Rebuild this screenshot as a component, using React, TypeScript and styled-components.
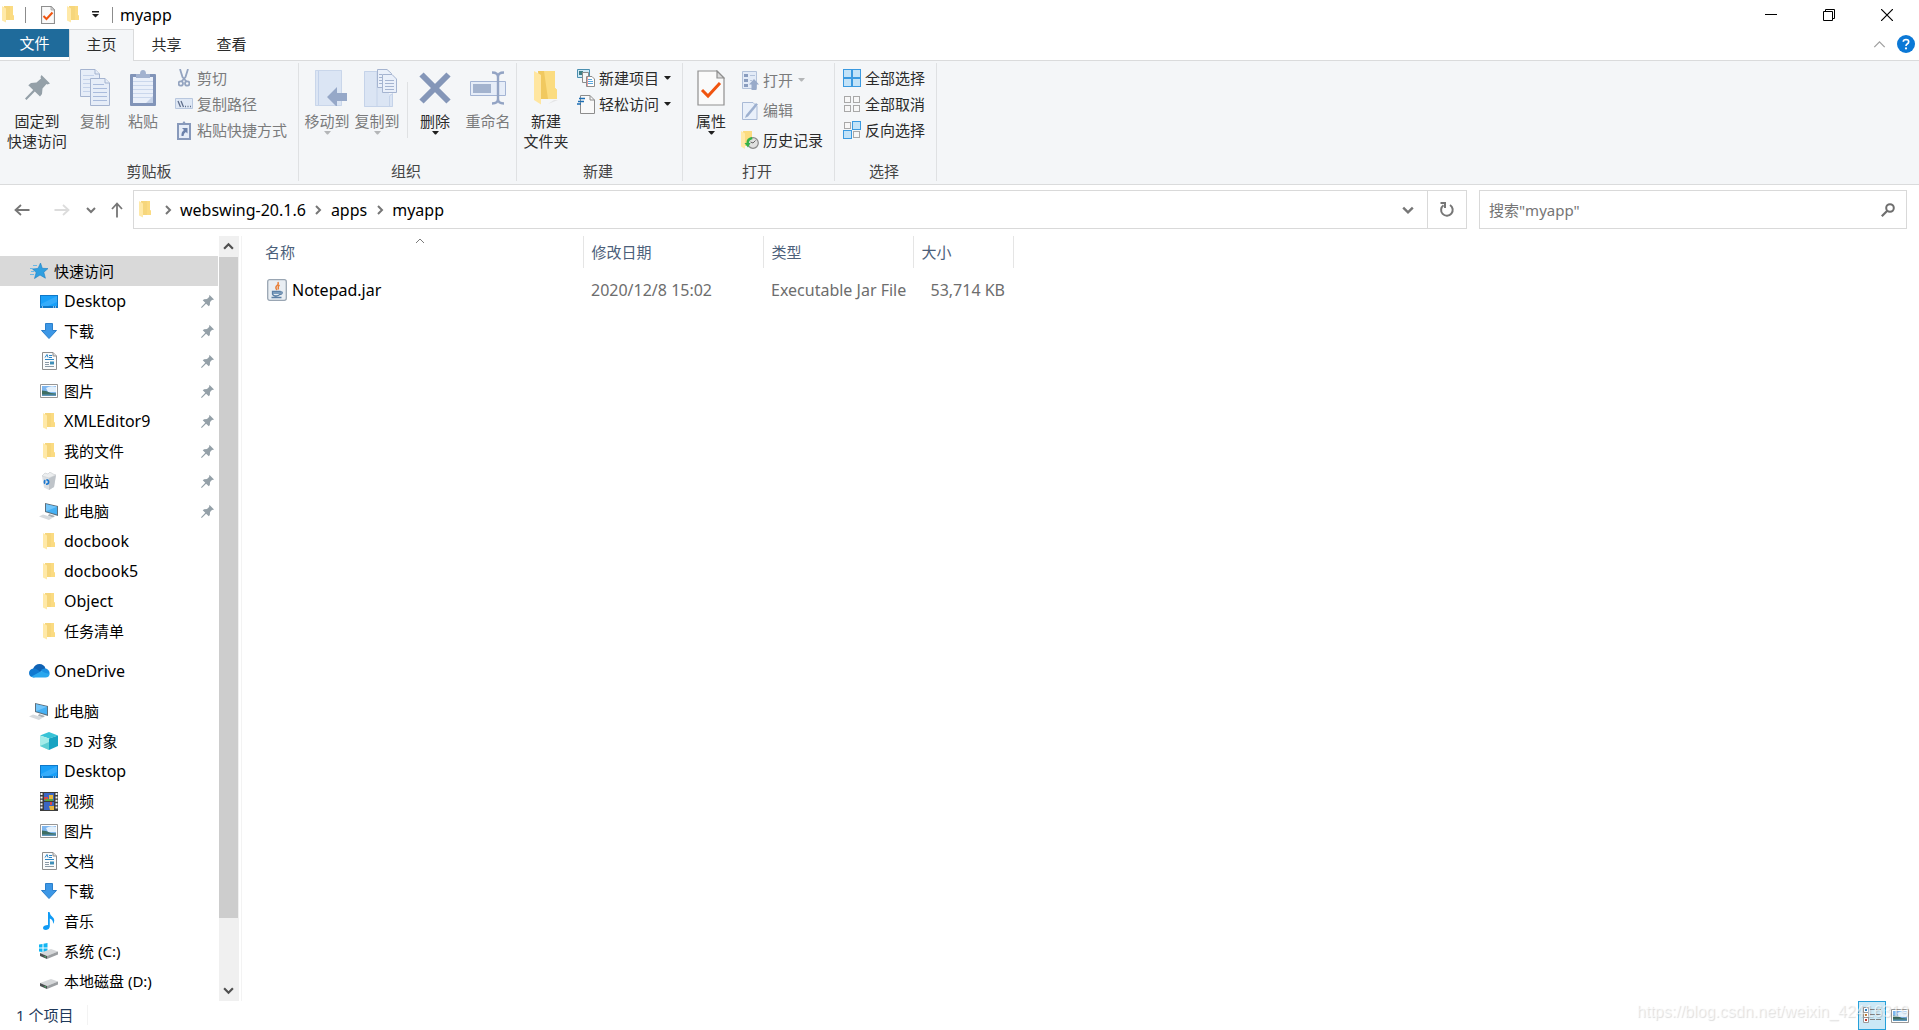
import React from "react";
import styled, { createGlobalStyle } from "styled-components";

const GlobalStyle = createGlobalStyle`
  *, *::before, *::after { box-sizing: border-box; }
  body { margin: 0; background: #ffffff; }
  button, input, a, table { font: inherit; color: inherit; }
  button { background: none; border: 0; padding: 0; margin: 0; }
  a { text-decoration: none; }
  ul { list-style: none; margin: 0; padding: 0; }
  svg { display: block; flex: none; }
`;

const Window = styled.div`
  display: flex;
  flex-direction: column;
  height: 100vh;
  overflow: hidden;
  background: #ffffff;
  color: #000000;
  font-family: "Noto Sans", "Noto Sans CJK SC", sans-serif;
  font-size: 15px;
  line-height: 20px;
`;

/* ---------- title bar ---------- */

const TitleBar = styled.header`
  display: flex;
  align-items: center;
  height: 29px;
  padding: 0 3px 0 2px;
`;

const QuickTools = styled.div`
  display: flex;
  align-items: center;
`;

const QuickButton = styled.button<{ $gap: number }>`
  margin-right: ${(p) => p.$gap}px;
`;

const ThinRule = styled.span<{ $gap: number }>`
  width: 1px;
  height: 16px;
  margin-right: ${(p) => p.$gap}px;
  background: #8c8c8c;
`;

const WindowTitle = styled.h1`
  flex: 1;
  margin: 0;
  font-size: 16px;
  font-weight: 400;
  line-height: 28px;
`;

const WindowButton = styled.button`
  display: flex;
  align-items: center;
  justify-content: center;
  width: 58px;
  height: 28px;
`;

/* ---------- ribbon tabs ---------- */

const TabRow = styled.div`
  display: flex;
  align-items: flex-start;
  height: 32px;
  border-bottom: 1px solid #dadbdc;
`;

const FileTab = styled.button`
  width: 69px;
  height: 28px;
  background: #1f6b9b;
  color: #ffffff;
`;

const Tab = styled.button<{ $active?: boolean }>`
  width: 65px;
  height: 32px;
  padding-bottom: 4px;
  border: 1px solid ${(p) => (p.$active ? "#dadbdc" : "transparent")};
  border-bottom: 0;
  background: ${(p) => (p.$active ? "#f4f6f8" : "transparent")};
  color: #2b2b2b;
`;

const TabTools = styled.div`
  display: flex;
  align-items: center;
  gap: 11px;
  height: 30px;
  margin-left: auto;
  padding-right: 4px;
`;

/* ---------- ribbon ---------- */

const Ribbon = styled.section`
  display: flex;
  height: 124px;
  padding: 2px 0 3px;
  background: #f4f6f8;
  border-bottom: 1px solid #dadbdc;
`;

const Group = styled.section<{ $inset?: boolean }>`
  display: flex;
  flex-direction: column;
  justify-content: space-between;
  padding-left: ${(p) => (p.$inset ? 3 : 0)}px;
  border-right: 1px solid #dfe1e3;
`;

const GroupItems = styled.div`
  display: flex;
  align-items: flex-start;
`;

const GroupName = styled.h2<{ $inset?: boolean }>`
  margin: 0;
  padding-right: ${(p) => (p.$inset ? 6 : 0)}px;
  font-size: 15px;
  font-weight: 400;
  line-height: 20px;
  text-align: center;
  color: #444444;
`;

const BigButton = styled.button<{ $width?: number; $off?: boolean }>`
  display: flex;
  flex-direction: column;
  align-items: center;
  width: ${(p) => p.$width ?? 50}px;
  padding-top: 6px;
  color: ${(p) => (p.$off ? "#7a7b7c" : "#2b2b2b")};
  white-space: nowrap;
`;

const BigIcon = styled.span`
  display: flex;
  align-items: center;
  justify-content: center;
  height: 37px;
  margin-bottom: 5px;
`;

const SmallColumn = styled.div<{ $row?: number; $right: number }>`
  display: grid;
  grid-auto-rows: ${(p) => p.$row ?? 26}px;
  padding: 2px ${(p) => p.$right}px 0 4px;
`;

const SmallButton = styled.button<{ $off?: boolean }>`
  display: flex;
  align-items: center;
  gap: 3px;
  color: ${(p) => (p.$off ? "#7a7b7c" : "#2b2b2b")};
  white-space: nowrap;
`;

const SmallIcon = styled.span`
  display: flex;
  justify-content: center;
  width: 20px;
`;

const CaretBox = styled.span`
  padding-left: 2px;
`;

const ItemRule = styled.span`
  width: 1px;
  height: 56px;
  margin: 19px 2px 0 5px;
  background: #dfe1e3;
`;

/* ---------- address row ---------- */

const AddressRow = styled.div`
  display: flex;
  align-items: center;
  height: 51px;
  padding: 0 12px 2px 0;
`;

const NavButtons = styled.div`
  display: flex;
  align-items: center;
  width: 133px;
  padding-left: 14px;
`;

const NavButton = styled.button<{ $gap: number }>`
  margin-right: ${(p) => p.$gap}px;
`;

const AddressBox = styled.div`
  display: flex;
  align-items: center;
  flex: 1;
  height: 39px;
  padding-left: 5px;
  border: 1px solid #d9d9d9;
`;

const Crumbs = styled.nav`
  display: flex;
  align-items: center;
  flex: 1;
  padding-left: 4px;
  font-size: 16px;
`;

const CrumbArrow = styled.span`
  display: flex;
  justify-content: center;
  width: 25px;
`;

const BoxButton = styled.button<{ $divided?: boolean }>`
  display: flex;
  align-items: center;
  justify-content: center;
  width: 39px;
  height: 37px;
  border-left: ${(p) => (p.$divided ? "1px solid #d9d9d9" : "0")};
`;

const SearchBox = styled.label`
  display: flex;
  align-items: center;
  width: 428px;
  height: 39px;
  margin-left: 12px;
  padding: 0 11px 0 9px;
  border: 1px solid #d9d9d9;
`;

const SearchInput = styled.input`
  flex: 1;
  min-width: 0;
  padding: 0;
  border: 0;
  outline: 0;
  background: transparent;
  &::placeholder { color: #757575; opacity: 1; }
`;

/* ---------- body ---------- */

const Body = styled.div`
  display: flex;
  flex: 1;
  min-height: 0;
`;

const SidePanel = styled.aside`
  display: flex;
  width: 242px;
  border-right: 1px solid #f3f3f3;
`;

const Tree = styled.nav`
  flex: 1;
  min-width: 0;
  padding-top: 20px;
  overflow: hidden;
`;

const TreeGroup = styled.ul`
  margin-bottom: 10px;
`;

const TreeLink = styled.a<{ $level: number; $selected?: boolean; $latin?: boolean }>`
  display: flex;
  align-items: center;
  gap: 4px;
  height: 30px;
  padding: 0 4px 0 ${(p) => (p.$level ? 38 : 28)}px;
  background: ${(p) => (p.$selected ? "#d9d9d9" : "transparent")};
  font-size: ${(p) => (p.$latin ? 16 : 15)}px;
  white-space: nowrap;
`;

const TreeIcon = styled.span`
  display: flex;
  align-items: center;
  justify-content: center;
  width: 22px;
  height: 22px;
`;

const TreeText = styled.span`
  flex: 1;
`;

const ScrollBar = styled.div`
  display: flex;
  flex-direction: column;
  width: 20px;
  margin: 0 2px 0 1px;
  padding-right: 1px;
  background: #f0f0f0;
`;

const ScrollArrow = styled.button`
  display: flex;
  align-items: center;
  justify-content: center;
  height: 21px;
`;

const ScrollThumb = styled.div`
  flex: 661;
  background: #cdcdcd;
`;

const ScrollRest = styled.div`
  flex: 62;
`;

const FilePane = styled.main`
  flex: 1;
  padding-left: 15px;
`;

const FileTable = styled.table`
  width: 756px;
  table-layout: fixed;
  border-collapse: collapse;
  tbody::before { content: ""; display: block; height: 7px; }
`;

const HeadCell = styled.th<{ $width: number }>`
  position: relative;
  width: ${(p) => p.$width}px;
  height: 32px;
  padding: 0 0 0 8px;
  border-right: 1px solid #e5e5e5;
  font-weight: 400;
  text-align: left;
  color: #4c607a;
`;

const SortMark = styled.span`
  position: absolute;
  top: 0;
  left: 50%;
  margin-left: -5px;
`;

const Cell = styled.td<{ $right?: boolean }>`
  height: 30px;
  padding: 0 8px;
  font-size: 16px;
  white-space: nowrap;
  color: #6d6d6d;
  text-align: ${(p) => (p.$right ? "right" : "left")};
`;

const FileName = styled.a`
  display: flex;
  align-items: center;
  gap: 5px;
  padding-left: 2px;
  color: #000000;
`;

/* ---------- status bar ---------- */

const StatusBar = styled.footer`
  position: relative;
  display: flex;
  align-items: center;
  height: 29px;
  padding: 0 10px 0 16px;
  color: #1e395b;
`;

const StatusText = styled.span`
  padding-right: 14px;
  margin-bottom: 2px;
  border-right: 1px solid #f3f3f3;
`;

const ViewButtons = styled.div`
  display: flex;
  align-items: center;
  gap: 5px;
  margin-left: auto;
`;

const ViewButton = styled.button<{ $active?: boolean }>`
  display: flex;
  align-items: center;
  justify-content: center;
  width: ${(p) => (p.$active ? 28 : 18)}px;
  height: 29px;
  border: ${(p) => (p.$active ? "1px solid #26a0da" : "0")};
  background: ${(p) => (p.$active ? "#cbe8f6" : "transparent")};
`;

const Watermark = styled.span`
  position: absolute;
  right: 10px;
  top: 0;
  font-family: "Liberation Sans", sans-serif;
  font-size: 16px;
  line-height: 22px;
  color: rgba(255, 255, 255, 0.6);
  text-shadow: 1px 1px 1px rgba(0, 0, 0, 0.14);
  pointer-events: none;
`;

/* ---------- drawings ---------- */

const Folder = () => (
  <svg width="12" height="17" viewBox="0 0 12 17">
    <path d="M2 0H11V9L12 10V14H2Z" fill="#f6d67c" />
    <path d="M8 0H11V9L12 10V14H8Z" fill="#fbdb82" />
    <path d="M0 0L4 2.500V16.500L0 14.500Z" fill="#ffe9a8" />
  </svg>
);

const BigFolder = () => (
  <svg width="24" height="35" viewBox="0 0 24 35">
    <path d="M20 30L24 30L14 34Z" fill="#e4e5e6" />
    <path d="M4 1H21V18L23 20V29H6Z" fill="#f1c95f" />
    <path d="M10 1H21V18L23 20V29H14Z" fill="#fbdc80" />
    <path d="M0 1L7 5V34.500L0 30Z" fill="#ffe6a0" />
  </svg>
);

const CheckPage = ({ big }: { big?: boolean }) => (
  <svg width={big ? 28 : 14} height={big ? 36 : 18} viewBox="0 0 28 36">
    <path d="M1 1H20L27 8V35H1Z" fill="#fafafa" stroke="#8f8f8f" strokeWidth={big ? 1.2 : 2.4} />
    <path d="M20 1V8H27Z" fill="#dcdcdc" stroke="#8f8f8f" strokeWidth="1.200" />
    <path d="M5 20L11 26L23 13" fill="none" stroke="#f0540f" strokeWidth={big ? 3 : 4} />
  </svg>
);

const Caret = ({ color = "#1f1f1f" }: { color?: string }) => (
  <svg width="7" height="4" viewBox="0 0 7 4">
    <path d="M0 0H7L4 3.500H3Z" fill={color} />
  </svg>
);

const QuickCaret = () => (
  <svg width="7" height="7" viewBox="0 0 7 7">
    <path d="M0 0H7V1.500H0ZM0 3H7L3.500 6.500Z" fill="#1f1f1f" />
  </svg>
);

type Dir = "up" | "down" | "left" | "right";
const turn: Record<Dir, number> = { up: 0, right: 90, down: 180, left: 270 };

const Chevron = ({ dir, size = 10, color = "#767676", weight = 2 }: { dir: Dir; size?: number; color?: string; weight?: number }) => (
  <svg width={size} height={size} viewBox="0 0 10 10">
    <path d="M1 7L5 3L9 7" fill="none" stroke={color} strokeWidth={weight} transform={`rotate(${turn[dir]} 5 5)`} />
  </svg>
);

const Arrow = ({ dir, color = "#767676" }: { dir: Dir; color?: string }) => (
  <svg width="16" height="16" viewBox="0 0 16 16">
    <g transform={`rotate(${turn[dir]} 8 8)`} fill="none" stroke={color} strokeWidth="1.800">
      <path d="M8 15.500V1.500M3 7L8 1.500L13 7" />
    </g>
  </svg>
);

const Pin = ({ size }: { size: number }) => (
  <svg width={size} height={size} viewBox="0 0 25 25">
    <path d="M16.500 0L25 8.500L22.500 9.500L21.500 9L17.500 13.500L17 19L15 21.500L9.800 16.600L1.500 25L0 23.500L8.200 15L3.300 10.200L6 8L11.500 7.500L16 3.500L15.500 2Z" fill="#94a0a8" />
  </svg>
);

const Pages = () => (
  <svg width="30" height="37" viewBox="0 0 30 37">
    <g fill="#e6edf8" stroke="#a5b4d0">
      <path d="M.5.500H15L19.500 5V27.500H.5Z" />
      <path d="M15 .5V5H19.500" />
      <path d="M3 6.500H14M3 10.500H16M3 14.500H16M3 18.500H16M3 22.500H16" stroke="#c4d2ea" />
      <path d="M10.500 9.500H25L29.500 14V36.500H10.500Z" />
      <path d="M25 9.500V14H29.500" />
      <path d="M13 15.500H24M13 19.500H27M13 23.500H27M13 27.500H27M13 31.500H27" stroke="#a9bbdc" />
    </g>
  </svg>
);

const Clipboard = () => (
  <svg width="26" height="38" viewBox="0 0 26 38">
    <rect y="5" width="26" height="32" rx="1" fill="#8194b8" />
    <path d="M3 8H23V34H3Z" fill="#eaf0fa" />
    <path d="M3 12.500H23M3 16.500H23M3 20.500H23M3 24.500H23M3 28.500H23" stroke="#cad7ec" />
    <path d="M23 27V34H16Z" fill="#c5d2e8" />
    <path d="M6 9V5H10Q10 1 13 1Q16 1 16 5H20V9Z" fill="#a2b2cf" />
  </svg>
);

const Scissors = () => (
  <svg width="12" height="18" viewBox="0 0 12 18">
    <g fill="none" stroke="#94a4c0" strokeWidth="1.800">
      <path d="M2 0L4.500 8L8.500 12.500M10 0L7.500 8L3.500 12.500" />
      <circle cx="2.800" cy="14.500" r="2.200" />
      <circle cx="9.200" cy="14.500" r="2.200" />
    </g>
  </svg>
);

const PathBox = () => (
  <svg width="18" height="12" viewBox="0 0 18 12">
    <path d="M.5.500H17.500V10.500H.5Z" fill="#dfe8f5" stroke="#b8c7de" />
    <path d="M3 3L5.500 9M6 3L8.500 9M10 8.500H11M12.500 8.500H13.500M15 8.500H16" stroke="#5e6e8c" strokeWidth="1.300" />
  </svg>
);

const PasteShortcut = () => (
  <svg width="14" height="19" viewBox="0 0 14 19">
    <rect x="1" y="3" width="12" height="15" fill="#e6edf8" stroke="#8799bb" strokeWidth="2" />
    <path d="M4 4V2H5.500L7 0L8.500 2H10V4Z" fill="#8799bb" />
    <path d="M5 7H10.500V12.500L8.800 11Q6.500 12.500 6.500 15H4.500Q4 11 7 9Z" fill="#6c82ab" />
  </svg>
);

const MoveTo = () => (
  <svg width="40" height="36" viewBox="-8 0 40 36">
    <path d="M0 0H27V36H0Z" fill="#dbe5f4" />
    <path d="M.5.500H26.500V35.500H.5Z" fill="none" stroke="#c9d6ea" />
    <path d="M3.500 1V35" stroke="#c3d2ea" />
    <path d="M12 27L22 17V23H32V31H22V37Z" fill="#96a8c8" />
  </svg>
);

const CopyTo = () => (
  <svg width="42" height="38" viewBox="-8 0 42 38">
    <path d="M0 2H25V25H29V38H0Z" fill="#dbe5f4" />
    <path d="M.5 2.500H13V37.500H.5ZM25.500 37V27L28.500 24.500V37.500H12" fill="none" stroke="#c5d3e9" />
    <g fill="#eaf0fa" stroke="#a5b4d0">
      <path d="M13.500.500H23L27.500 4.500V18.500H13.500Z" />
      <path d="M18.500 5.500H28L32.500 10V23.500H18.500Z" />
      <path d="M15 5.500H18M15 8.500H18M15 11.500H18M15 14.500H18M21 11.500H30M21 14.500H30M21 17.500H30M21 20.500H30" />
    </g>
  </svg>
);

const Cross = () => (
  <svg width="32" height="32" viewBox="0 0 32 32">
    <path d="M2.500 2.500L29.500 29.500M29.500 2.500L2.500 29.500" stroke="#8496b8" strokeWidth="6" />
  </svg>
);

const Rename = () => (
  <svg width="36" height="34" viewBox="0 0 36 34">
    <path d="M.5 10.500H35.500V24.500H.5Z" fill="#e6edf8" stroke="#a3b4d4" />
    <path d="M3 13H21V22H3Z" fill="#a3b3ce" />
    <path d="M22 1.500Q28 1.500 28 6V28Q28 32.500 22 32.500M34 1.500Q28 1.500 28 6M28 28Q28 32.500 34 32.500" fill="none" stroke="#93a4c4" strokeWidth="2.400" />
  </svg>
);

const NewItem = () => (
  <svg width="18" height="18" viewBox="0 0 18 18">
    <path d="M.5.500H12.500V8.500H.5Z" fill="#cfe9f7" stroke="#4a8fb0" />
    <path d="M2 2H6V6H2Z" fill="#3f7f86" />
    <path d="M5.500 3.500H11.500V13.500H5.500Z" fill="#f7f7f7" stroke="#8c8c8c" />
    <path d="M9.500 7.500H15L17.500 10V17.500H9.500Z" fill="#ffffff" stroke="#8c8c8c" />
    <path d="M11 10.500H15M11 12.500H16M11 14.500H16" stroke="#5aa7dd" />
    <path d="M10.500 8V17" stroke="#e9a0a0" />
  </svg>
);

const EasyAccess = () => (
  <svg width="18" height="19" viewBox="0 0 18 19">
    <path d="M3.500.500H13L17.500 5V18.500H3.500Z" fill="#f9f9f9" stroke="#8c8c8c" />
    <path d="M13 .5V5H17.500" fill="none" stroke="#8c8c8c" />
    <path d="M2 3.500H8M1 6.500H7M0 9H4" stroke="#1d6fb5" strokeWidth="1.500" />
  </svg>
);

const OpenIcon = () => (
  <svg width="17" height="19" viewBox="0 0 17 19">
    <path d="M.5.500H14.500V17.500H.5Z" fill="#e3ebf7" stroke="#b3c2da" />
    <path d="M2 3H6V6H2ZM2 8H6V11H2ZM2 13H6V16H2Z" fill="#8a9dbf" />
    <path d="M8 4.500H13M8 9.500H10" stroke="#b3c2da" />
    <path d="M12 8L17 13.500H14.500V19H9.500V13.500H7Z" fill="#98aac9" />
  </svg>
);

const EditIcon = () => (
  <svg width="17" height="19" viewBox="0 0 17 19">
    <path d="M.5 1.500H11L15 5.500V18.500H.5Z" fill="#e9f0fa" stroke="#a9bad6" />
    <path d="M4 14L14 2L16 3.500L6 15.500L3 17Z" fill="#9db0cf" />
  </svg>
);

const HistoryIcon = () => (
  <svg width="18" height="18" viewBox="0 0 18 18">
    <path d="M2 0H11V15H2Z" fill="#fbdc80" />
    <path d="M0 0L4 2.500V18L0 15.500Z" fill="#ffe9a8" />
    <circle cx="12" cy="12" r="5.300" fill="#e0e0e0" stroke="#8a8a8a" strokeWidth="1.200" />
    <path d="M12 12L14.500 9.500M12 12L9.500 11" stroke="#666666" />
    <path d="M11 6Q5 7 5.500 12H3.500L7 16.500L9.500 12H7.800Q8 9 11.500 8.200Z" fill="#35b24a" />
  </svg>
);

const squares = [[0, 0], [1, 0], [0, 1], [1, 1]];

const SelectAll = () => (
  <svg width="18" height="18" viewBox="0 0 18 18">
    <path d="M0 0H18V18H0Z" fill="#3b9ae0" />
    {squares.map(([x, y]) => (
      <rect key={`${x}${y}`} x={1 + x * 9} y={1 + y * 9} width="7" height="7" fill="#c3e3f8" />
    ))}
  </svg>
);

const SelectGrid = ({ lit }: { lit?: boolean }) => (
  <svg width="18" height="18" viewBox="0 0 18 18">
    {squares.map(([x, y]) => {
      const on = lit && x !== y;
      return (
        <rect
          key={`${x}${y}`}
          x={(on ? 0.5 : 1.5) + x * 9}
          y={(on ? 0.5 : 1.5) + y * 9}
          width={on ? 8 : 6}
          height={on ? 8 : 6}
          fill={on ? "#c3e3f8" : "#f7f7f7"}
          stroke={on ? "#3b9ae0" : "#a8a8a8"}
        />
      );
    })}
  </svg>
);

const Refresh = () => (
  <svg width="16" height="17" viewBox="0 0 16 17">
    <path d="M11 4A5.800 5.800 0 1 1 4.500 4.200" fill="none" stroke="#767676" strokeWidth="2" />
    <path d="M1.500 2H6V7" fill="none" stroke="#767676" strokeWidth="2" />
  </svg>
);

const Magnifier = () => (
  <svg width="14" height="14" viewBox="0 0 14 14">
    <circle cx="9" cy="5" r="3.800" fill="none" stroke="#6e6e6e" strokeWidth="2" />
    <path d="M6.300 7.700L.8 13.200" stroke="#6e6e6e" strokeWidth="2.200" />
  </svg>
);

const Star = () => (
  <svg width="18" height="16" viewBox="0 0 18 16">
    <path d="M10.500 0L12.300 5.300L18 5.600L13.800 9.200L15.400 15.200L10 12L4.500 15.500L6.200 9.500L2.500 6L8 5.400Z" fill="#2f9fe0" stroke="#1c80c4" strokeWidth=".6" />
    <path d="M3 2.500H7M0 5.500H3M1 8.500H4M0 11.500H4" stroke="#6ab8e6" />
  </svg>
);

const Monitor = () => (
  <svg width="18" height="13" viewBox="0 0 18 13">
    <rect width="18" height="13" fill="#0f78c8" />
    <rect x="1" y="1" width="16" height="10" fill="#1aa0f8" />
    <path d="M17 1V7L8 11H1V9Z" fill="#35acfb" />
    <path d="M2 12H3M13 12H14M15 12H16" stroke="#ffffff" />
  </svg>
);

const Download = () => (
  <svg width="16" height="16" viewBox="0 0 16 16">
    <path d="M4.500.500H11.500V7.500H15.500L8 15.500L.5 7.500H4.500Z" fill="#3c97e6" stroke="#2b7fcb" />
  </svg>
);

const Doc = () => (
  <svg width="15" height="18" viewBox="0 0 15 18">
    <path d="M.5.500H11L14.500 4V17.500H.5Z" fill="#fbfbfb" stroke="#8e8e8e" />
    <path d="M11 .5V4H14.500" fill="#dddddd" stroke="#8e8e8e" />
    <path d="M3 5.500L5 2.500L6 5.500M7 3.500H10M7 5.500H10M3 7.500H12" fill="none" stroke="#2a86c8" />
    <path d="M3 10.500H7M3 12.500H7M3 14.500H12" stroke="#8c9aa6" />
    <path d="M8 9.500H12V12.500H8Z" fill="#3f8fb8" />
  </svg>
);

const Picture = () => (
  <svg width="18" height="14" viewBox="0 0 18 14">
    <path d="M.5.500H17.500V13.500H.5Z" fill="#ffffff" stroke="#979797" />
    <path d="M2 2H16V12H2Z" fill="#7fb6ee" />
    <path d="M6 4Q11 1 16 3V8H8Z" fill="#e3f0fc" />
    <path d="M2 6.500L6 7L11 9L16 9.500V12H2Z" fill="#3f6f63" />
    <path d="M2 10.500H16V12H2Z" fill="#5f96bb" />
  </svg>
);

const Bin = () => (
  <svg width="16" height="18" viewBox="0 0 16 18">
    <path d="M1 4L8 6L15 3L13 15L8 18L3 15.500Z" fill="#dde0e3" />
    <path d="M8 6L15 3L13 15L8 18Z" fill="#bfc4c9" />
    <path d="M1 4L4 1L7 2L9 0L12 2L15 3L8 6Z" fill="#eceeef" stroke="#c6c9cc" strokeWidth=".6" />
    <circle cx="5.500" cy="10" r="2.100" fill="none" stroke="#1b78d0" strokeWidth="1.700" strokeDasharray="3.400 1" />
  </svg>
);

const Computer = () => (
  <svg width="20" height="17" viewBox="0 0 20 17">
    <path d="M6 0L19 3V13L6 9Z" fill="#5c6f7c" />
    <path d="M7 1.200L18 3.800V11.600L7 8.300Z" fill="#45b0f4" />
    <path d="M7 1.200L18 3.800L7 8.300Z" fill="#74c6fa" />
    <path d="M10 11L16 13L14 14.500L9 13Z" fill="#a8b0b6" />
    <path d="M4 11.500L14 14.500L10 17L0 13.500Z" fill="#d6dadd" />
  </svg>
);

const Cloud = () => (
  <svg width="21" height="14" viewBox="0 0 21 14">
    <path d="M4 5Q6 0 10.500 0Q15 0 16.500 4.500L10 9Z" fill="#0f62b4" />
    <path d="M5 13.500Q0 13 0 9Q.2 5 4.500 4.500Q7 4.300 8.500 5.800L13 9Z" fill="#1179d0" />
    <path d="M12 6Q14 4 17 4.500Q21 6 20.500 10L14 10Z" fill="#1b90e2" />
    <path d="M2.500 12.500L12.500 7Q15 9 20.700 10Q20 13.500 16.500 13.500H5Q3.500 13.500 2.500 12.500Z" fill="#2aa7ee" />
  </svg>
);

const Cube = () => (
  <svg width="18" height="18" viewBox="0 0 18 18">
    <path d="M0 3.500L9 0L18 3.500L9 6.500Z" fill="#37c3d6" />
    <path d="M0 3.500L9 6.500V18L0 14Z" fill="#a4ece9" />
    <path d="M18 3.500L9 6.500V18L18 14Z" fill="#17a3c2" />
    <path d="M0 14L9 10V18Z" fill="#5fcfd3" />
  </svg>
);

const Film = () => (
  <svg width="18" height="19" viewBox="0 0 18 19">
    <path d="M0 0H18V19H0Z" fill="#3d3d3d" />
    <path d="M1.500 1V18M16.500 1V18" stroke="#f4f4f4" strokeWidth="2" strokeDasharray="2 1.400" />
    <path d="M4 1H14V9H4ZM4 10H14V18H4Z" fill="#3b66c4" />
    <path d="M9 3H13V7H9ZM9 14H14V18H10Z" fill="#e9b73b" />
    <path d="M4 5H8V8H4ZM10 10H12V13H10Z" fill="#d8494a" />
    <path d="M5 7H13V9H5Z" fill="#5ea23f" />
  </svg>
);

const Note = () => (
  <svg width="12" height="18" viewBox="0 0 12 18">
    <path d="M5 0H6.500Q7 3.500 10 5.500Q12.500 8 10 12Q10.500 8 6.800 6.500V14.500Q6.500 17.500 3 18Q0 18 0 15.800Q.5 13 5 13Z" fill="#109bf5" />
  </svg>
);

const Drive = ({ system }: { system?: boolean }) => (
  <svg width="20" height="16" viewBox="0 0 20 16">
    {system && <path d="M0 1.500L3.500 1V4.500H0ZM4.500 .8L8.500 0V4.500H4.500ZM0 5.500H3.500V9L0 8.500ZM4.500 5.500H8.500V9.700L4.500 9Z" fill="#12b5f2" />}
    <path d="M1 10L12 6L19 8.500L8 13Z" fill="#d5d7d9" />
    <path d="M1 10L8 13V16L1 13Z" fill="#4c4f52" />
    <path d="M8 13L19 8.500V11.500L8 16Z" fill="#9b9ea1" />
    <path d="M5.500 13.500L7 14" stroke="#48d06a" />
  </svg>
);

const Jar = () => (
  <svg width="20" height="22" viewBox="0 0 20 22">
    <rect x=".7" y=".7" width="18.600" height="20.600" rx="2" fill="#e9eef3" stroke="#9aa6b3" strokeWidth="1.300" />
    <path d="M11 3Q12 5.500 9.500 7Q8 9 10 11M12.500 6Q10.500 7.500 11.500 10.500" fill="none" stroke="#e8803a" strokeWidth="1.400" />
    <path d="M5.500 12.500H13V15Q12 17 9 17Q6 17 5.500 15ZM13 13Q16 12.500 15 14.500Q14.500 15.500 12.500 15.500M4.500 18.500H14.500" fill="none" stroke="#5c80a6" strokeWidth="1.300" />
    <path d="M6 13H13V15H6Z" fill="#7c9dbd" />
  </svg>
);

const ListView = () => (
  <svg width="18" height="17" viewBox="0 0 18 17">
    <g fill="#ffffff" stroke="#9a9a9a">
      <path d="M.5.500H5.500V5.500H.5ZM.5 5.500H5.500V10.500H.5ZM.5 10.500H5.500V15.500H.5Z" />
    </g>
    <path d="M2 3H4" stroke="#2d7fc0" strokeWidth="2" />
    <path d="M2 8H4" stroke="#c07a2d" strokeWidth="2" />
    <path d="M2 13H4" stroke="#c0392d" strokeWidth="2" />
    <path d="M7 2.500H12M13 2.500H18M7 7.500H12M13 7.500H18M7 12.500H12M13 12.500H18" stroke="#808080" />
  </svg>
);

const Help = () => (
  <svg width="18" height="18" viewBox="0 0 18 18">
    <circle cx="9" cy="9" r="9" fill="#0b78d6" />
    <path d="M6.300 6.800Q6.300 4.500 9 4.500Q11.700 4.600 11.700 6.700Q11.700 8 10.200 9Q9 9.800 9 11" fill="none" stroke="#ffffff" strokeWidth="1.700" />
    <circle cx="9" cy="13.400" r="1.100" fill="#ffffff" />
  </svg>
);

/* ---------- data ---------- */

type Node = { text: string; icon: React.ReactNode; pinned?: boolean; root?: boolean; selected?: boolean };

const treeGroups: Node[][] = [
  [
    { text: "快速访问", icon: <Star />, root: true, selected: true },
    { text: "Desktop", icon: <Monitor />, pinned: true },
    { text: "下载", icon: <Download />, pinned: true },
    { text: "文档", icon: <Doc />, pinned: true },
    { text: "图片", icon: <Picture />, pinned: true },
    { text: "XMLEditor9", icon: <Folder />, pinned: true },
    { text: "我的文件", icon: <Folder />, pinned: true },
    { text: "回收站", icon: <Bin />, pinned: true },
    { text: "此电脑", icon: <Computer />, pinned: true },
    { text: "docbook", icon: <Folder /> },
    { text: "docbook5", icon: <Folder /> },
    { text: "Object", icon: <Folder /> },
    { text: "任务清单", icon: <Folder /> },
  ],
  [{ text: "OneDrive", icon: <Cloud />, root: true }],
  [
    { text: "此电脑", icon: <Computer />, root: true },
    { text: "3D 对象", icon: <Cube /> },
    { text: "Desktop", icon: <Monitor /> },
    { text: "视频", icon: <Film /> },
    { text: "图片", icon: <Picture /> },
    { text: "文档", icon: <Doc /> },
    { text: "下载", icon: <Download /> },
    { text: "音乐", icon: <Note /> },
    { text: "系统 (C:)", icon: <Drive system /> },
    { text: "本地磁盘 (D:)", icon: <Drive /> },
  ],
];

const crumbs = ["webswing-20.1.6", "apps", "myapp"];

const GREY = "#b4b6b8";

type BigProps = { icon: React.ReactNode; lines: string[]; width?: number; off?: boolean; menu?: boolean };

const Big = ({ icon, lines, width, off, menu }: BigProps) => (
  <BigButton $width={width} $off={off} disabled={off}>
    <BigIcon>{icon}</BigIcon>
    {lines.map((line) => (
      <span key={line}>{line}</span>
    ))}
    {menu && <Caret color={off ? GREY : undefined} />}
  </BigButton>
);

type SmallProps = { icon: React.ReactNode; text: string; off?: boolean; menu?: boolean };

const Small = ({ icon, text, off, menu }: SmallProps) => (
  <SmallButton $off={off} disabled={off}>
    <SmallIcon>{icon}</SmallIcon>
    {text}
    {menu && (
      <CaretBox>
        <Caret color={off ? GREY : undefined} />
      </CaretBox>
    )}
  </SmallButton>
);

export default function App() {
  return (
    <Window>
      <GlobalStyle />
      <TitleBar>
        <QuickTools>
          <QuickButton $gap={11} aria-label="窗口"><Folder /></QuickButton>
          <ThinRule $gap={15} />
          <QuickButton $gap={12} aria-label="属性"><CheckPage /></QuickButton>
          <QuickButton $gap={13} aria-label="新建文件夹"><Folder /></QuickButton>
          <QuickButton $gap={13} aria-label="自定义快速访问工具栏"><QuickCaret /></QuickButton>
          <ThinRule $gap={7} />
        </QuickTools>
        <WindowTitle>myapp</WindowTitle>
        <WindowButton aria-label="最小化">
          <svg width="12" height="12" viewBox="0 0 12 12"><path d="M0 5.500H12" stroke="#000000" /></svg>
        </WindowButton>
        <WindowButton aria-label="还原">
          <svg width="12" height="12" viewBox="0 0 12 12"><path d="M.5 2.500H9.500V11.500H.5ZM2.500 2.500V.5H11.500V9.500H9.500" fill="none" stroke="#000000" /></svg>
        </WindowButton>
        <WindowButton aria-label="关闭">
          <svg width="12" height="12" viewBox="0 0 12 12"><path d="M0 0L12 12M12 0L0 12" stroke="#000000" strokeWidth="1.200" /></svg>
        </WindowButton>
      </TitleBar>

      <TabRow>
        <FileTab>文件</FileTab>
        <Tab $active>主页</Tab>
        <Tab>共享</Tab>
        <Tab>查看</Tab>
        <TabTools>
          <button aria-label="折叠功能区"><Chevron dir="up" size={13} color="#a0a0a0" weight={1} /></button>
          <button aria-label="帮助"><Help /></button>
        </TabTools>
      </TabRow>

      <Ribbon>
        <Group>
          <GroupItems>
            <Big width={74} icon={<Pin size={25} />} lines={["固定到", "快速访问"]} />
            <Big width={42} off icon={<Pages />} lines={["复制"]} />
            <Big width={54} off icon={<Clipboard />} lines={["粘贴"]} />
            <SmallColumn $right={11}>
              <Small off icon={<Scissors />} text="剪切" />
              <Small off icon={<PathBox />} text="复制路径" />
              <Small off icon={<PasteShortcut />} text="粘贴快捷方式" />
            </SmallColumn>
          </GroupItems>
          <GroupName>剪贴板</GroupName>
        </Group>
        <Group $inset>
          <GroupItems>
            <Big off menu icon={<MoveTo />} lines={["移动到"]} />
            <Big off menu icon={<CopyTo />} lines={["复制到"]} />
            <ItemRule />
            <Big menu icon={<Cross />} lines={["删除"]} />
            <Big width={56} off icon={<Rename />} lines={["重命名"]} />
          </GroupItems>
          <GroupName $inset>组织</GroupName>
        </Group>
        <Group $inset>
          <GroupItems>
            <Big width={52} icon={<BigFolder />} lines={["新建", "文件夹"]} />
            <SmallColumn $right={11}>
              <Small menu icon={<NewItem />} text="新建项目" />
              <Small menu icon={<EasyAccess />} text="轻松访问" />
            </SmallColumn>
          </GroupItems>
          <GroupName $inset>新建</GroupName>
        </Group>
        <Group $inset>
          <GroupItems>
            <Big menu icon={<CheckPage big />} lines={["属性"]} />
            <SmallColumn $row={30} $right={11}>
              <Small off menu icon={<OpenIcon />} text="打开" />
              <Small off icon={<EditIcon />} text="编辑" />
              <Small icon={<HistoryIcon />} text="历史记录" />
            </SmallColumn>
          </GroupItems>
          <GroupName $inset>打开</GroupName>
        </Group>
        <Group $inset>
          <GroupItems>
            <SmallColumn $right={11}>
              <Small icon={<SelectAll />} text="全部选择" />
              <Small icon={<SelectGrid />} text="全部取消" />
              <Small icon={<SelectGrid lit />} text="反向选择" />
            </SmallColumn>
          </GroupItems>
          <GroupName $inset>选择</GroupName>
        </Group>
      </Ribbon>

      <AddressRow>
        <NavButtons>
          <NavButton $gap={24} aria-label="后退"><Arrow dir="left" /></NavButton>
          <NavButton $gap={16} aria-label="前进" disabled><Arrow dir="right" color="#dcdcdc" /></NavButton>
          <NavButton $gap={13} aria-label="最近浏览的位置"><Chevron dir="down" /></NavButton>
          <NavButton $gap={0} aria-label="上移"><Arrow dir="up" /></NavButton>
        </NavButtons>
        <AddressBox>
          <Folder />
          <Crumbs aria-label="地址">
            {crumbs.map((name) => (
              <React.Fragment key={name}>
                <CrumbArrow><Chevron dir="right" /></CrumbArrow>
                <a href={`#${name}`}>{name}</a>
              </React.Fragment>
            ))}
          </Crumbs>
          <BoxButton aria-label="以前的位置"><Chevron dir="down" size={12} /></BoxButton>
          <BoxButton $divided aria-label="刷新"><Refresh /></BoxButton>
        </AddressBox>
        <SearchBox>
          <SearchInput type="text" aria-label="搜索" placeholder={'搜索"myapp"'} />
          <Magnifier />
        </SearchBox>
      </AddressRow>

      <Body>
        <SidePanel>
          <Tree aria-label="导航窗格">
            {treeGroups.map((nodes) => (
              <TreeGroup key={nodes[0].text}>
                {nodes.map((node) => (
                  <li key={node.text}>
                    <TreeLink
                      href={`#${node.text}`}
                      $level={node.root ? 0 : 1}
                      $selected={node.selected}
                      $latin={/^[A-Za-z0-9]+$/.test(node.text)}
                    >
                      <TreeIcon>{node.icon}</TreeIcon>
                      <TreeText>{node.text}</TreeText>
                      {node.pinned && <Pin size={13} />}
                    </TreeLink>
                  </li>
                ))}
              </TreeGroup>
            ))}
          </Tree>
          <ScrollBar>
            <ScrollArrow aria-label="向上滚动"><Chevron dir="up" size={11} color="#505050" /></ScrollArrow>
            <ScrollThumb />
            <ScrollRest />
            <ScrollArrow aria-label="向下滚动"><Chevron dir="down" size={11} color="#505050" /></ScrollArrow>
          </ScrollBar>
        </SidePanel>
        <FilePane>
          <FileTable>
            <thead>
              <tr>
                <HeadCell $width={326}>
                  名称
                  <SortMark><Chevron dir="up" color="#7a7a7a" weight={1} /></SortMark>
                </HeadCell>
                <HeadCell $width={180}>修改日期</HeadCell>
                <HeadCell $width={150}>类型</HeadCell>
                <HeadCell $width={100}>大小</HeadCell>
              </tr>
            </thead>
            <tbody>
              <tr>
                <Cell><FileName href="#Notepad.jar"><Jar />Notepad.jar</FileName></Cell>
                <Cell>2020/12/8 15:02</Cell>
                <Cell>Executable Jar File</Cell>
                <Cell $right>53,714 KB</Cell>
              </tr>
            </tbody>
          </FileTable>
        </FilePane>
      </Body>

      <StatusBar>
        <StatusText>1 个项目</StatusText>
        <ViewButtons>
          <ViewButton $active aria-label="详细信息"><ListView /></ViewButton>
          <ViewButton aria-label="大缩略图"><Picture /></ViewButton>
        </ViewButtons>
        <Watermark>https://blog.csdn.net/weixin_42416319</Watermark>
      </StatusBar>
    </Window>
  );
}
